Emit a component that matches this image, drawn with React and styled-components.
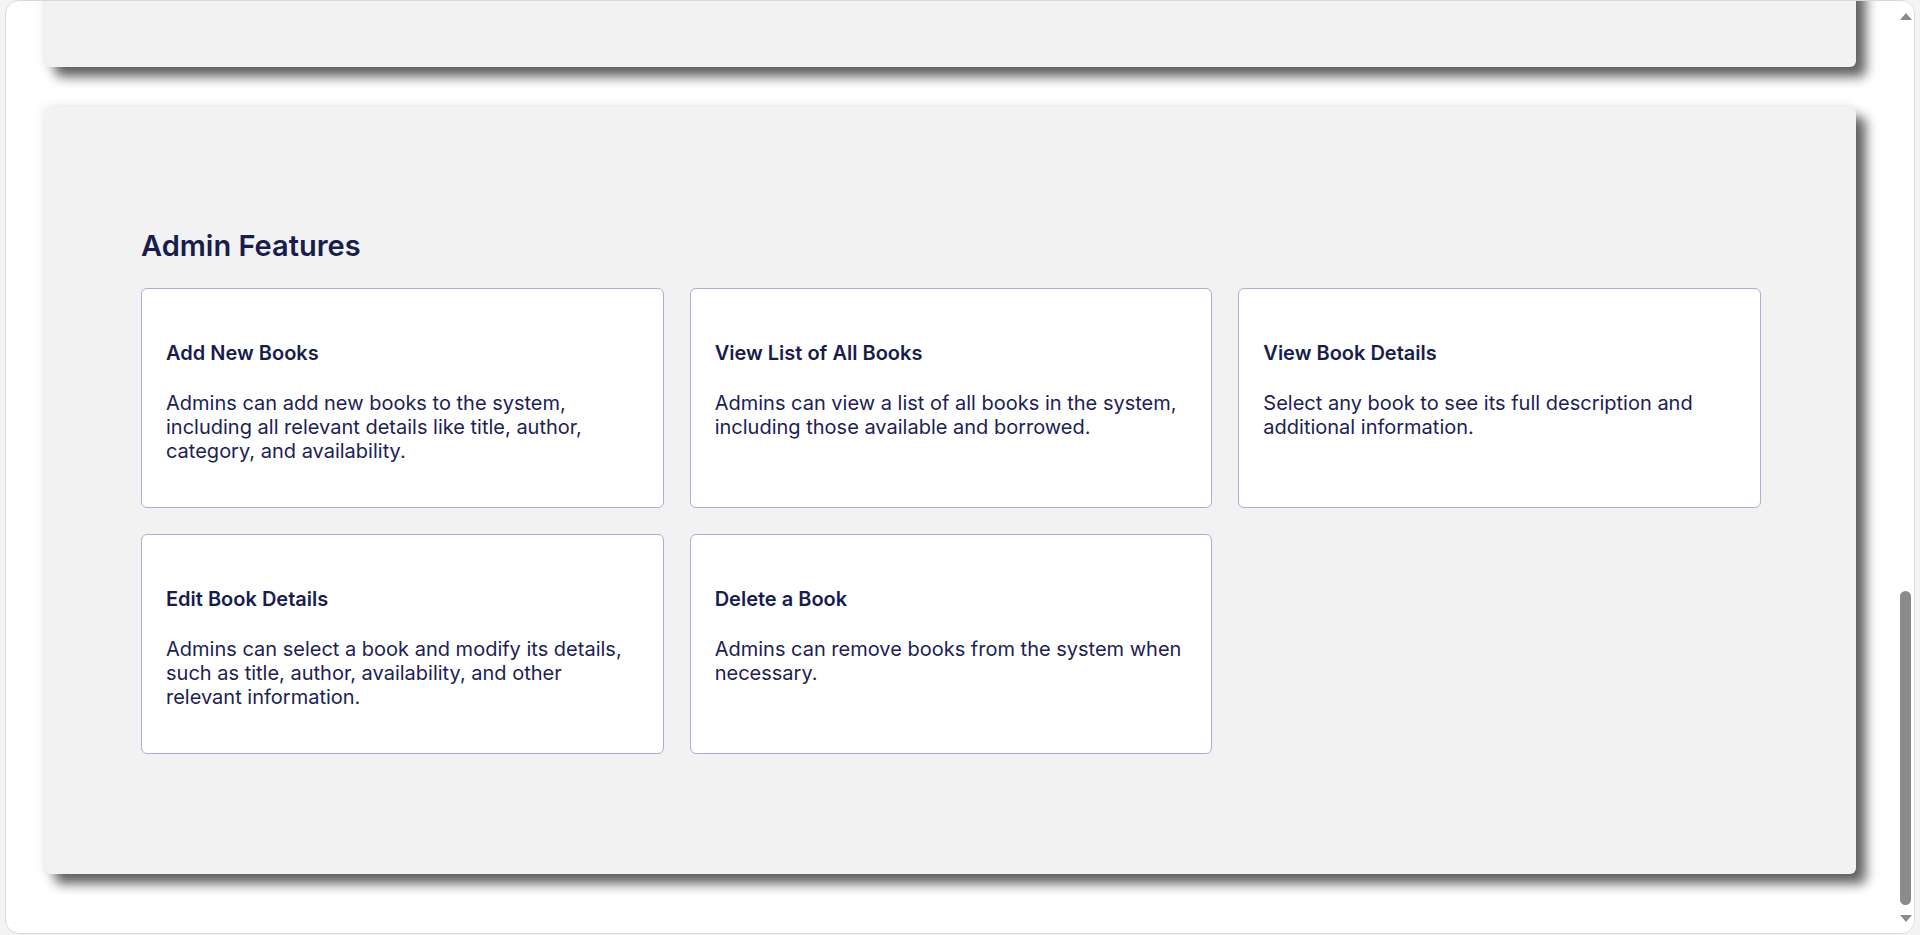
import { useLayoutEffect, useRef, useState } from 'react'
import styled, { createGlobalStyle } from 'styled-components'

const GlobalStyle = createGlobalStyle`
  html, body {
    margin: 0;
    height: 100%;
    overflow: hidden;
    background: #f4f4f4;
    font-family: Inter, "Noto Sans", sans-serif;
  }
`

const features = [
  {
    title: 'Add New Books',
    text: 'Admins can add new books to the system, including all relevant details like title, author, category, and availability.',
  },
  {
    title: 'View List of All Books',
    text: 'Admins can view a list of all books in the system, including those available and borrowed.',
  },
  {
    title: 'View Book Details',
    text: 'Select any book to see its full description and additional information.',
  },
  {
    title: 'Edit Book Details',
    text: 'Admins can select a book and modify its details, such as title, author, availability, and other relevant information.',
  },
  {
    title: 'Delete a Book',
    text: 'Admins can remove books from the system when necessary.',
  },
]

const Window = styled.div`
  margin: 0 5px;
  height: 934px;
  box-sizing: border-box;
  border: 1px solid #d9d9d9;
  border-radius: 14px;
  background: #fff;
  overflow: hidden;
  display: flex;
`

const Scroller = styled.div`
  flex: 1;
  overflow-y: auto;
  overflow-x: hidden;
  scrollbar-width: none;

  &::-webkit-scrollbar {
    display: none;
  }
`

const Rail = styled.div`
  width: 16px;
  flex-shrink: 0;
  display: flex;
  flex-direction: column;
  background: #fff;
`

const ArrowButton = styled.div`
  height: 28px;
  flex-shrink: 0;
  box-sizing: border-box;
  display: flex;
  justify-content: center;
  padding-top: ${(p) => (p.$down ? '10px' : '12px')};

  &::before {
    content: '';
    width: 0;
    height: 0;
    border-left: 6.5px solid transparent;
    border-right: 6.5px solid transparent;
    ${(p) => (p.$down ? 'border-top: 7px solid #8b8b8b;' : 'border-bottom: 7px solid #8b8b8b;')}
  }
`

const Track = styled.div`
  flex: 1;
  display: flex;
  flex-direction: column;
  justify-content: flex-end;
`

const Thumb = styled.div`
  width: 11px;
  margin-left: 2px;
  border-radius: 6px;
  background: #8b8b8b;
`

const Page = styled.main`
  display: flex;
  flex-direction: column;
  gap: 40px;
  padding: 40px 42px 59px 39px;
`

const Panel = styled.section`
  box-sizing: border-box;
  min-height: ${(p) => p.$minHeight || 'auto'};
  padding: 121px 95px 120px 96px;
  background: #f2f2f2;
  border-radius: 6px;
  box-shadow: 10px 10px 12px rgba(0, 0, 0, 0.6), 0 0 12px rgba(0, 0, 0, 0.12);
`

const SectionTitle = styled.h2`
  margin: 0 0 24px;
  font-size: 29px;
  line-height: 36px;
  font-weight: 600;
  color: #181d4e;
`

const Grid = styled.div`
  display: grid;
  grid-template-columns: repeat(3, 1fr);
  grid-auto-rows: 220px;
  gap: 26px;
`

const Card = styled.div`
  box-sizing: border-box;
  padding: 52px 24px 0;
  background: #fff;
  border: 1px solid #a9b1d3;
  border-radius: 6px;
  color: #1c2255;

  & h3 {
    margin: 0;
    font-size: 20px;
    line-height: 24px;
    font-weight: 600;
    color: #181d4e;
  }

  & p {
    margin: 26px 0 0;
    font-size: 20px;
    line-height: 24px;
    font-weight: 400;
  }
`

export default function App() {
  const scrollRef = useRef(null)
  const trackRef = useRef(null)
  const [thumbHeight, setThumbHeight] = useState(0)

  useLayoutEffect(() => {
    const el = scrollRef.current
    if (!el) return
    el.scrollTop = el.scrollHeight
    const track = trackRef.current ? trackRef.current.clientHeight : 0
    setThumbHeight(Math.round((track * el.clientHeight) / el.scrollHeight))
  }, [])

  return (
    <>
      <GlobalStyle />
      <Window>
        <Scroller ref={scrollRef}>
          <Page>
            <Panel $minHeight="1694px" />
            <Panel>
              <SectionTitle>Admin Features</SectionTitle>
              <Grid>
                {features.map(({ title, text }) => (
                  <Card key={title}>
                    <h3>{title}</h3>
                    <p>{text}</p>
                  </Card>
                ))}
              </Grid>
            </Panel>
          </Page>
        </Scroller>
        <Rail>
          <ArrowButton />
          <Track ref={trackRef}>
            <Thumb style={{ height: thumbHeight }} />
          </Track>
          <ArrowButton $down />
        </Rail>
      </Window>
    </>
  )
}
